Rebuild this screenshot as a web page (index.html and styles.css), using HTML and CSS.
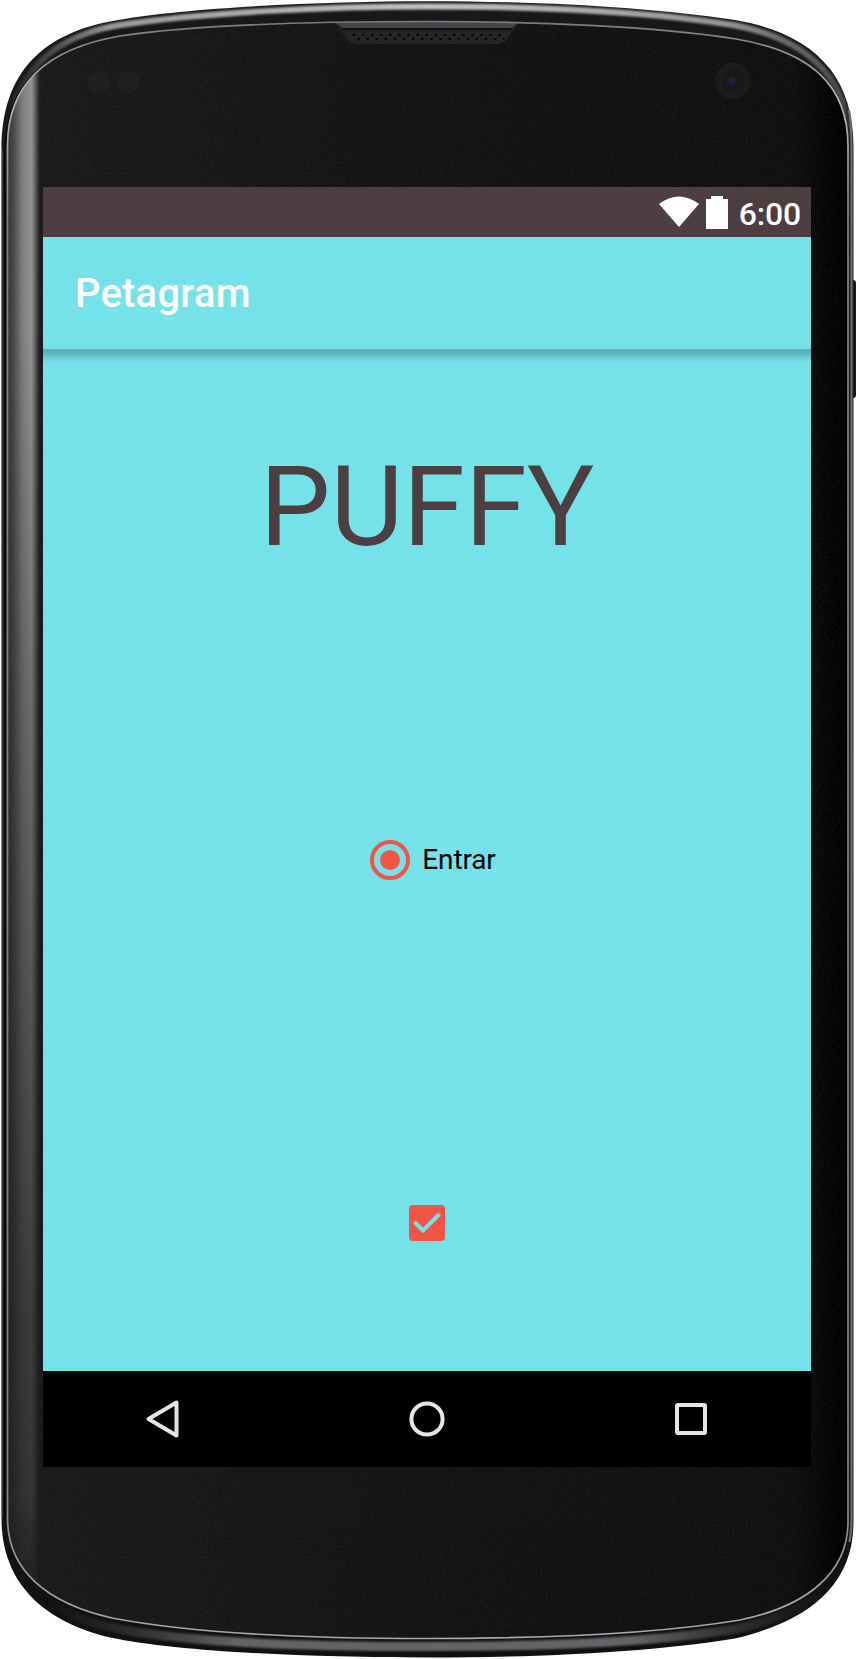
FILE: index.html
```html
<!DOCTYPE html>
<html lang="es">
<head>
<meta charset="utf-8">
<title>Petagram</title>
<link rel="stylesheet" href="styles.css">
</head>
<body>
<div class="device">
  <svg class="frame" viewBox="0 0 856 1659" aria-hidden="true">
    <defs>
      <linearGradient id="rim" x1="0" y1="0" x2="0" y2="1">
        <stop offset="0" stop-color="#17181a"/><stop offset=".5" stop-color="#202224"/><stop offset="1" stop-color="#101010"/>
      </linearGradient>
      <linearGradient id="face" x1="0" x2="1" y1="0" y2="0">
        <stop offset="0" stop-color="#1b1b1b"/><stop offset=".5" stop-color="#131313"/><stop offset=".93" stop-color="#101010"/><stop offset="1" stop-color="#000"/>
      </linearGradient>
      <linearGradient id="glare" x1="0" x2="1" y1="0" y2="0">
        <stop offset="0" stop-color="#303030"/><stop offset=".2" stop-color="#4a4a4a"/><stop offset=".45" stop-color="#7c7c7c"/><stop offset=".72" stop-color="#929292"/><stop offset=".86" stop-color="#505050"/><stop offset="1" stop-color="#202020" stop-opacity="0"/>
      </linearGradient>
      <linearGradient id="fade" x1="0" x2="0" y1="0" y2="1">
        <stop offset="0" stop-color="#fff"/><stop offset=".2" stop-color="#fff"/><stop offset=".44" stop-color="#aaa"/><stop offset=".8" stop-color="#444"/><stop offset=".9" stop-color="#383838"/><stop offset=".97" stop-color="#000"/>
      </linearGradient>
      <linearGradient id="edge" x1="0" x2="0" y1="0" y2="1">
        <stop offset="0" stop-color="#777b80"/><stop offset=".05" stop-color="#b5b7b8"/><stop offset=".12" stop-color="#85857f"/><stop offset=".9" stop-color="#808284"/><stop offset="1" stop-color="#a8aaae"/>
      </linearGradient>
      <linearGradient id="topShine" gradientUnits="userSpaceOnUse" x1="10" x2="852" y1="0" y2="0">
        <stop offset="0" stop-color="#777" stop-opacity=".1"/><stop offset=".12" stop-color="#999"/><stop offset=".5" stop-color="#c0c2c0"/><stop offset=".85" stop-color="#959595"/><stop offset=".99" stop-color="#777" stop-opacity=".5"/><stop offset="1" stop-color="#777" stop-opacity="0"/>
      </linearGradient>
      <linearGradient id="bottomShine" gradientUnits="userSpaceOnUse" x1="40" x2="830" y1="0" y2="0">
        <stop offset="0" stop-color="#3b3d3f" stop-opacity="0"/><stop offset=".25" stop-color="#626567"/><stop offset=".75" stop-color="#626567"/><stop offset="1" stop-color="#3b3d3f" stop-opacity="0"/>
      </linearGradient>
      <mask id="glareMask"><rect width="60" height="1659" fill="url(#fade)"/></mask>
      <path id="faceShape" d="M7.500 146C7.500 82 50 48 120 36C200 24 330 21.500 428 21.500C530 21.500 655 26 736 39C812 52 848 86 848 146V1522C848 1572 808 1606 740 1620C650 1635 530 1638.500 428 1638.500C310 1638.500 190 1633 112 1618C46 1603 7.500 1570 7.500 1518Z"/>
      <clipPath id="faceClip"><use href="#faceShape"/></clipPath>
      <pattern id="holes" x="348" y="32" width="9.1" height="9" patternUnits="userSpaceOnUse">
        <circle cx="1.5" cy="7" r="1.2"/><circle cx="6" cy="3" r="1.2"/>
      </pattern>
      <filter id="soft"><feGaussianBlur stdDeviation="1.1"/></filter>
      <filter id="grain" x="0" y="0" width="1" height="1">
        <feTurbulence type="fractalNoise" baseFrequency=".37" numOctaves="2"/>
        <feColorMatrix type="matrix" values="0 0 0 0 .5  0 0 0 0 .5  0 0 0 0 .5  .2 0 0 0 -.06"/>
      </filter>
    </defs>
    <rect x="850" y="280" width="6" height="118" rx="3" fill="#171717"/>
    <path d="M1.500 150C1.500 70 45 32 118 20C190 7 330 1.200 428 1.200C535 1.200 650 7 735 20C812 33 853.500 74 853.500 146V1522C853.500 1588 805 1622 735 1638.500C640 1654 520 1657.500 428 1657.500C310 1657.500 180 1652 110 1637.500C42 1621 1.500 1582 1.500 1518Z" fill="url(#rim)"/>
    <path d="M12 108C30 56 70 33 120 25C205 12 330 6.500 428 6.500C535 6.500 650 12 733 25C805 38 845 76 850.500 135" fill="none" stroke="url(#topShine)" stroke-width="6" filter="url(#soft)"/>
    <path d="M45 1598C68 1616 90 1624 120 1629C190 1643 310 1646.500 428 1646.500C530 1646.500 650 1643 735 1629C770 1622 800 1611 825 1590" fill="none" stroke="url(#bottomShine)" stroke-width="9" filter="url(#soft)"/>
    <path d="M5 1520V148C7 112 17 90 36 72" fill="none" stroke="#070707" stroke-width="1.500"/>
    <path d="M2.300 150V1518" fill="none" stroke="#3d3f40"/>
    <path d="M849 110Q851.500 126 851.500 146V1522Q851.500 1530 849.500 1542" fill="none" stroke="#6a6d6e" stroke-width="2.200"/>
    <use href="#faceShape" fill="url(#face)"/>
    <g clip-path="url(#faceClip)">
      <rect x="7" width="34" height="1659" fill="url(#glare)" mask="url(#glareMask)"/>
      <rect width="856" height="1659" filter="url(#grain)" opacity=".4"/>
    </g>
    <path d="M331 22Q337 24 340 29L347 39Q351 44 358 44H496Q503 44 507 39L514 29Q517 24 523 22Z" fill="#252525"/>
    <path d="M331 22H523Q516 23 512 28H343Q338 23 331 22" fill="#44464a"/>
    <path d="M342 29H512" stroke="#090909" stroke-width="1.500"/>
    <path d="M346 32H509L503 41H353Z" fill="url(#holes)"/>
    <use href="#faceShape" fill="none" stroke="url(#edge)" stroke-width="1.700"/>
    <g fill="#202020"><circle cx="99" cy="82" r="11"/><circle cx="129" cy="82" r="11"/></g>
    <circle cx="733" cy="81" r="18" fill="#1b1b1b"/><circle cx="733" cy="81" r="11" fill="#181818"/><circle cx="732" cy="81" r="4" fill="#211f43" filter="url(#soft)"/>
  </svg>
  <main class="screen">
    <div class="status">
      <svg class="wifi" viewBox="0 0 40 32"><path d="M0 8Q20-7 40 8L20 31Z" fill="#fff"/></svg>
      <svg class="battery" viewBox="0 0 22 33"><path d="M5 0H17V3H22V33H0V3H5Z" fill="#fff"/></svg>
      <span class="clock">6:00</span>
    </div>
    <header class="appbar"><h1 class="title">Petagram</h1></header>
    <section class="content">
      <h2 class="name">PUFFY</h2>
      <div class="radio">
        <svg width="40" height="40" viewBox="0 0 40 40"><circle cx="20" cy="20" r="18" fill="none" stroke="#f05545" stroke-width="4"/><circle cx="20" cy="20" r="10" fill="#f05545"/></svg>
        <span class="label">Entrar</span>
      </div>
      <svg class="check" width="36" height="36" viewBox="0 0 36 36"><rect width="36" height="36" rx="4" fill="#f05545"/><path d="M5.500 17L14 25.500L30.500 9" fill="none" stroke="#75e2e9" stroke-width="4"/></svg>
    </section>
    <nav class="nav">
      <svg width="36" height="40" viewBox="0 0 36 40"><path d="M3.500 20L31.500 3.500V36.500Z"/></svg>
      <svg width="36" height="40" viewBox="0 0 36 40"><circle cx="18" cy="20" r="15.600"/></svg>
      <svg width="36" height="40" viewBox="0 0 36 40"><rect x="4" y="6" width="28" height="28" rx="1"/></svg>
    </nav>
  </main>
</div>
</body>
</html>
```

FILE: styles.css
```css
body {
  margin: 0;
  background: #fff;
  font-family: Roboto, "Liberation Sans", sans-serif;
}
.device {
  box-sizing: border-box;
  position: relative;
  width: 856px;
  height: 1659px;
  padding: 187px 45px 192px 43px;
  overflow: hidden;
}
.frame {
  position: absolute;
  inset: 0;
  width: 856px;
  height: 1659px;
}
.screen {
  position: relative;
  display: flex;
  flex-direction: column;
  width: 768px;
  height: 1280px;
  background: #75e2e9;
}
.status {
  display: flex;
  box-sizing: border-box;
  height: 50px;
  padding: 9px 10px 0 0;
  justify-content: flex-end;
  background: #4d3e41;
}
.wifi {
  width: 40px;
  height: 32px;
}
.battery {
  width: 22px;
  height: 33px;
  margin-left: 7px;
}
.clock {
  margin-left: 11px;
  color: #fff;
  font-size: 32px;
  font-weight: 500;
  letter-spacing: -0.2px;
  line-height: 36px;
}
.appbar {
  display: flex;
  box-sizing: border-box;
  height: 112px;
  align-items: center;
  padding: 2px 0 0 32px;
}
.title {
  margin: 0;
  color: #fff;
  font-size: 40px;
  font-weight: 500;
  letter-spacing: 0.2px;
  line-height: 48px;
}
.content {
  display: flex;
  box-sizing: border-box;
  flex: 1;
  flex-direction: column;
  align-items: center;
  padding-top: 92px;
  background: linear-gradient(#5aaeb3 0, #5db5ba 4px, #75e2e9 13px);
}
.name {
  margin: 0;
  color: #4d3e41;
  font-size: 112px;
  font-weight: 400;
  line-height: 132px;
}
.radio {
  display: flex;
  height: 40px;
  margin: 267px 0 0 12px;
  align-items: center;
  gap: 12px;
  color: #000;
  font-size: 28px;
}
.label {
  padding-bottom: 2px;
  letter-spacing: -0.15px;
}
.check {
  margin-top: 325px;
}
.nav {
  display: flex;
  box-sizing: border-box;
  height: 96px;
  padding: 0 102px;
  align-items: center;
  justify-content: space-between;
  background: #000;
}
.nav svg {
  fill: none;
  stroke: #e5e5e5;
  stroke-width: 4;
  stroke-linejoin: round;
}
```
